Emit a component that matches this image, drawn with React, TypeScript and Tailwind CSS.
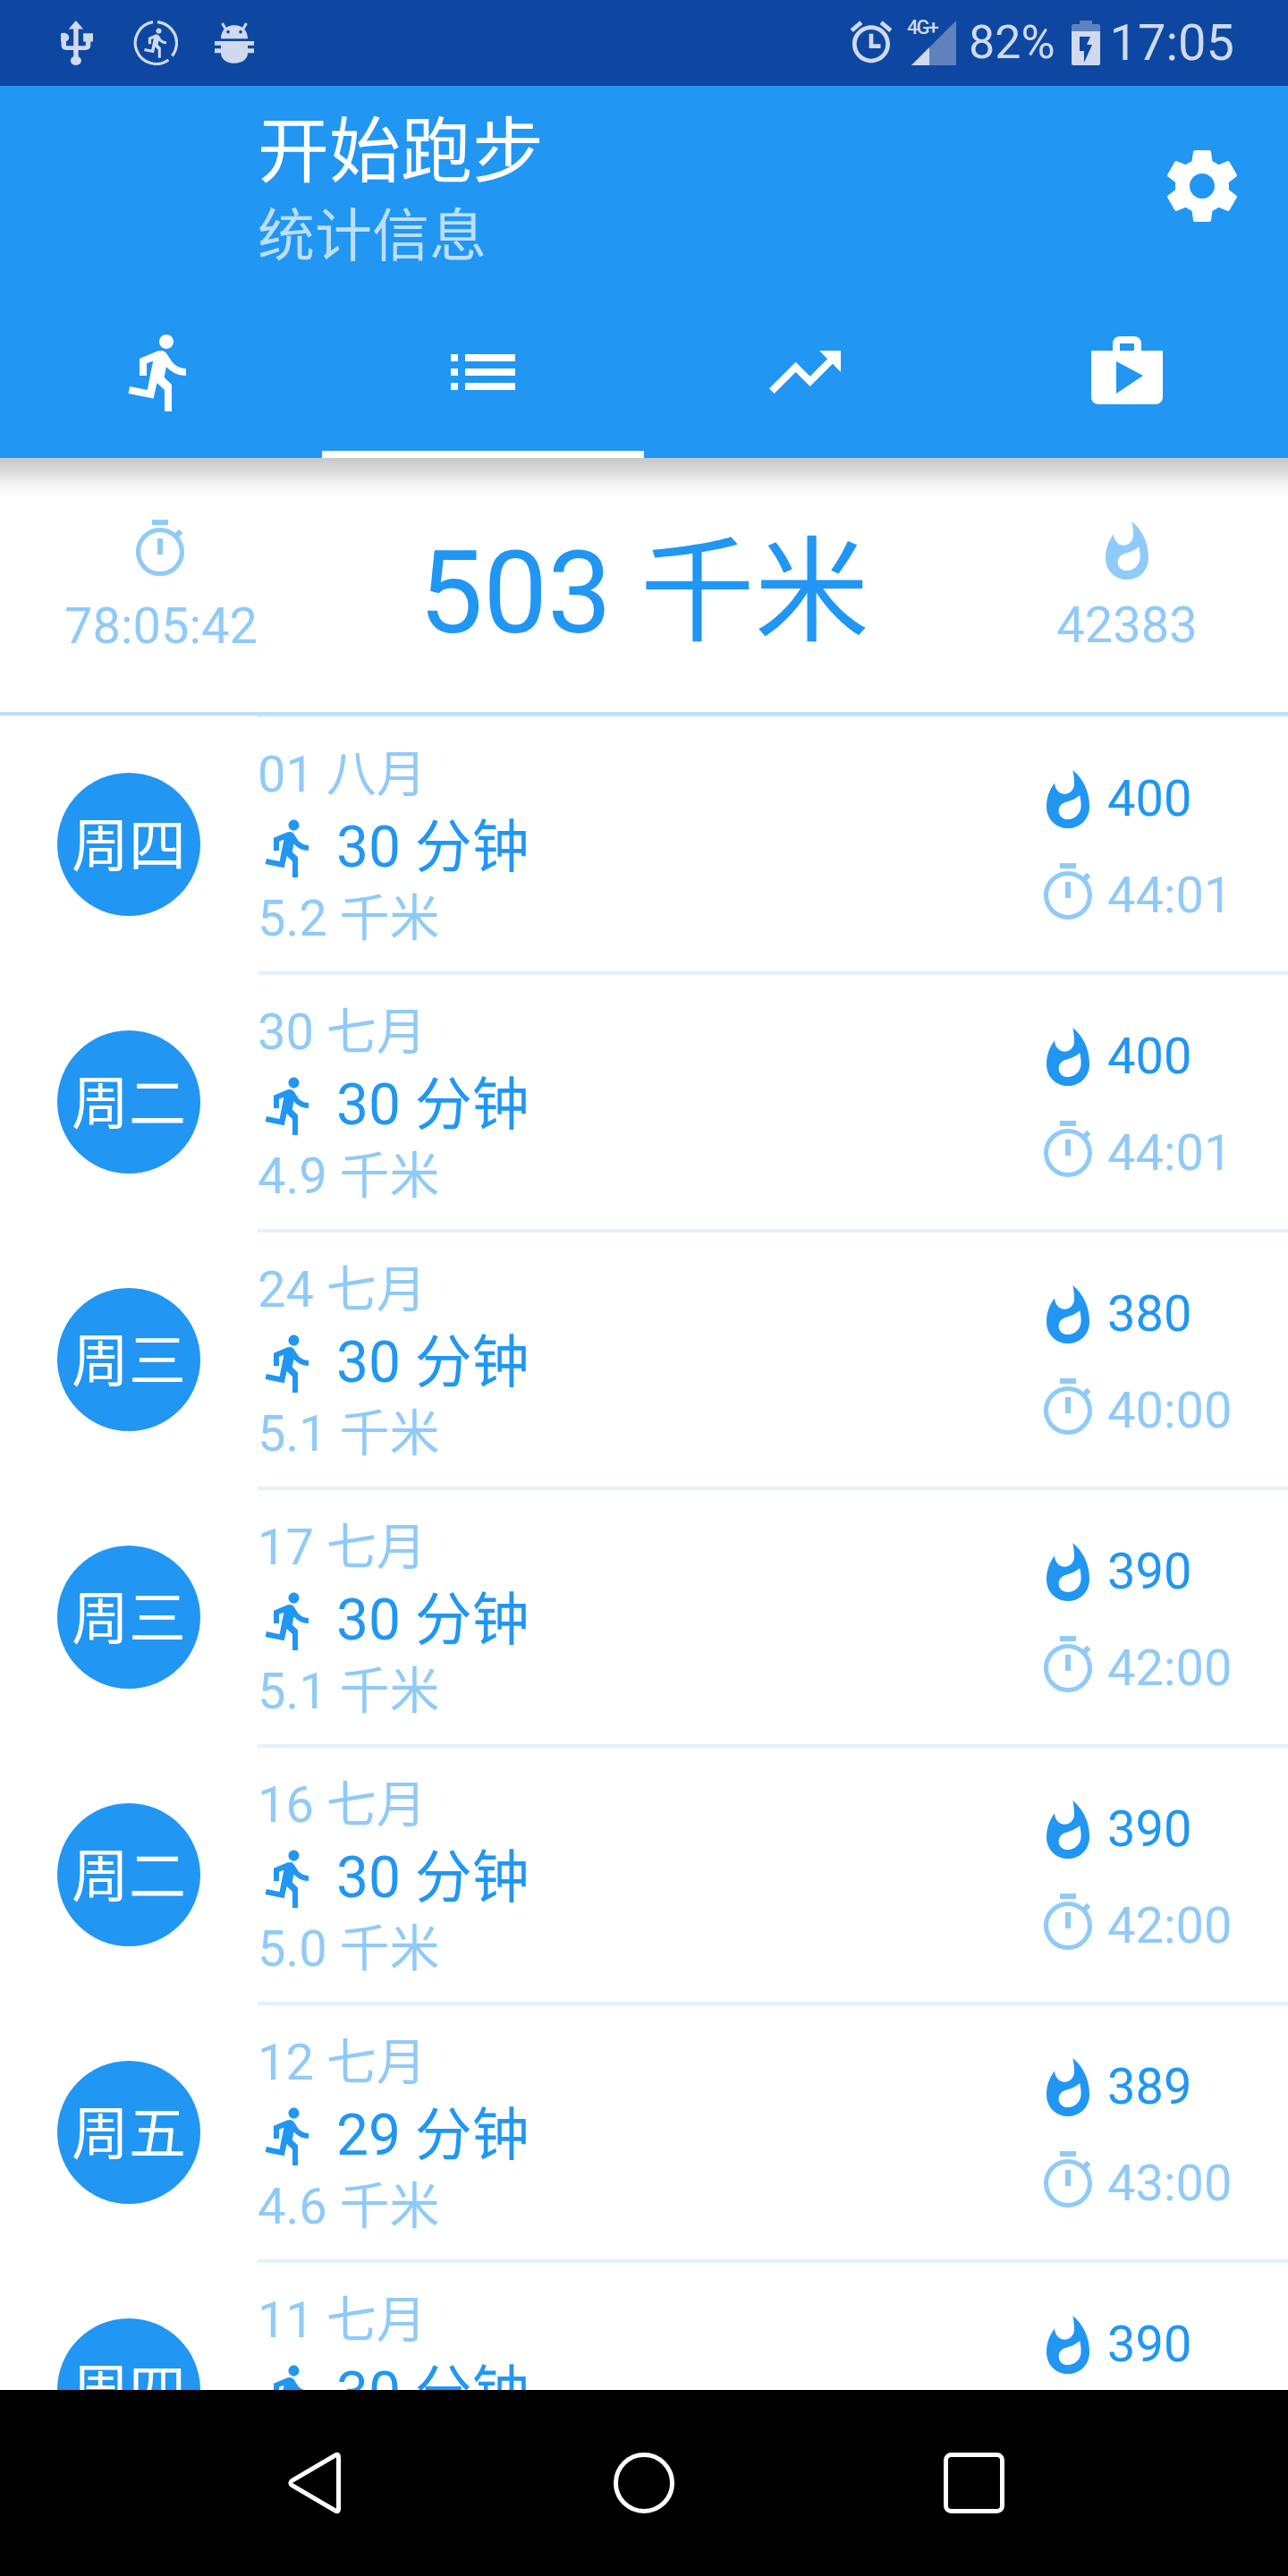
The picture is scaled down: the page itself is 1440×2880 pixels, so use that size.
import React from 'react';

const RUN = 'M13.49 5.48c1.1 0 2-.9 2-2s-.9-2-2-2-2 .9-2 2 .9 2 2 2zm-3.6 13.9l1-4.4 2.1 2v6h2v-7.5l-2.1-2 .6-3c1.3 1.5 3.3 2.5 5.5 2.5v-2c-1.9 0-3.5-1-4.3-2.4l-1-1.6c-.4-.6-1-1-1.7-1-.3 0-.5.1-.8.1l-5.2 2.2v4.7h2v-3.4l1.8-.7-1.6 8.1-4.9-1-.4 2 7 1.4z';
const LIST = 'M3 13h2v-2H3v2zm0 4h2v-2H3v2zm0-8h2V7H3v2zm4 4h14v-2H7v2zm0 4h14v-2H7v2zM7 7v2h14V7H7z';
const TREND = 'M16 6l2.29 2.29-4.88 4.88-4-4L2 16.59 3.41 18l6-6 4 4 6.3-6.29L22 12V6z';
const SHOP = 'M16 6V4c0-1.11-.89-2-2-2h-4c-1.11 0-2 .89-2 2v2H2v13c0 1.11.89 2 2 2h16c1.11 0 2-.89 2-2V6h-6zm-6-2h4v2h-4V4zM9 18V9l7.5 4L9 18z';
const GEAR = 'M19.43 12.98c.04-.32.07-.64.07-.98s-.03-.66-.07-.98l2.11-1.65c.19-.15.24-.42.12-.64l-2-3.46c-.12-.22-.39-.3-.61-.22l-2.49 1c-.52-.4-1.08-.73-1.69-.98l-.38-2.65C14.46 2.18 14.25 2 14 2h-4c-.25 0-.46.18-.49.42l-.38 2.65c-.61.25-1.17.59-1.69.98l-2.49-1c-.23-.09-.49 0-.61.22l-2 3.46c-.13.22-.07.49.12.64l2.11 1.65c-.04.32-.07.65-.07.98s.03.66.07.98l-2.11 1.65c-.19.15-.24.42-.12.64l2 3.46c.12.22.39.3.61.22l2.49-1c.52.4 1.08.73 1.69.98l.38 2.65c.03.24.24.42.49.42h4c.25 0 .46-.18.49-.42l.38-2.65c.61-.25 1.17-.59 1.69-.98l2.49 1c.23.09.49 0 .61-.22l2-3.46c.12-.22.07-.49-.12-.64l-2.11-1.65zM12 15.5c-1.93 0-3.5-1.57-3.5-3.5s1.57-3.5 3.5-3.5 3.5 1.57 3.5 3.5-1.57 3.5-3.5 3.5z';
const TIMER = 'M15 1H9v2h6V1zm-4 13h2V8h-2v6zm8.03-6.61l1.42-1.42c-.43-.51-.9-.99-1.41-1.41l-1.42 1.42C16.07 4.74 14.12 4 12 4c-4.97 0-9 4.03-9 9s4.02 9 9 9 9-4.03 9-9c0-2.12-.74-4.07-1.97-5.61zM12 20.3c-4.03 0-7.3-3.27-7.3-7.3s3.27-7.3 7.3-7.3 7.3 3.27 7.3 7.3-3.27 7.3-7.3 7.3z';
const USB = 'M15 7v4h1v2h-3V5h2l-3-4-3 4h2v8H8v-2.07c.7-.37 1.2-1.08 1.2-1.93 0-1.21-.99-2.2-2.2-2.2-1.21 0-2.2.99-2.2 2.2 0 .85.5 1.56 1.2 1.93V13c0 1.11.89 2 2 2h3v3.05c-.71.37-1.2 1.1-1.2 1.95 0 1.22.99 2.2 2.2 2.2 1.21 0 2.2-.98 2.2-2.2 0-.85-.49-1.58-1.2-1.95V15h3c1.11 0 2-.89 2-2v-2h1V7h-4z';
const ALARM = 'M22 5.72l-4.6-3.86-1.29 1.53 4.6 3.86L22 5.72zM7.88 3.39L6.6 1.86 2 5.71l1.29 1.53 4.59-3.85zM13 8h-2v7h5.5v-2H13V8zM12 4c-4.97 0-9 4.03-9 9s4.03 9 9 9c4.97 0 9-4.03 9-9s-4.03-9-9-9zm0 16c-3.87 0-7-3.13-7-7s3.13-7 7-7 7 3.13 7 7-3.13 7-7 7z';
const FLAME = 'M88 0C122 28 144 70 144 122C144 165 112 195 72 195C32 195 0 165 0 122C0 92 10 66 27 43C28 64 42 80 60 80C80 80 93 65 93 45C93 28 91 14 88 0ZM112 85C95 98 80 104 66 107C50 111 41 122 41 137C41 153 54 165 72 165C96 165 116 145 116 120C116 108 114 96 112 85Z';

const Mi = ({ d, className }: { d: string; className: string }) => (
  <svg viewBox="0 0 24 24" fill="currentColor" className={className}>
    <path d={d} />
  </svg>
);

const Flame = ({ className }: { className: string }) => (
  <svg viewBox="0 0 144 195" fill="currentColor" className={className}>
    <path d={FLAME} fillRule="evenodd" />
  </svg>
);

const rows = [
  { week: '周四', date: '01 八月', mins: '30', km: '5.2', cal: '400', time: '44:01' },
  { week: '周二', date: '30 七月', mins: '30', km: '4.9', cal: '400', time: '44:01' },
  { week: '周三', date: '24 七月', mins: '30', km: '5.1', cal: '380', time: '40:00' },
  { week: '周三', date: '17 七月', mins: '30', km: '5.1', cal: '390', time: '42:00' },
  { week: '周二', date: '16 七月', mins: '30', km: '5.0', cal: '390', time: '42:00' },
  { week: '周五', date: '12 七月', mins: '29', km: '4.6', cal: '389', time: '43:00' },
  { week: '周四', date: '11 七月', mins: '30', km: '5.0', cal: '390', time: '42:00' },
];

const StatusBar = () => (
  <div className="h-[96px] shrink-0 bg-[#0D47A1] text-[#D0D9ED] flex items-start pt-[23px]">
    <svg viewBox="5.8 1 13.2 21.2" preserveAspectRatio="none" fill="currentColor" className="ml-[68px] w-[36px] h-[50px]">
      <path d={USB} />
    </svg>
    {/* running app notification */}
    <svg viewBox="0 0 50 50" className="ml-[45px] w-[50px] h-[50px]">
      <path d="M27 1.6A23.5 23.5 0 0 1 43.4 39.6M39.4 44A23.5 23.5 0 1 1 22 1.7" fill="none" stroke="currentColor" strokeWidth="3.2" />
      <g transform="translate(7.6 6.2) scale(1.55)">
        <path d={RUN} fill="currentColor" />
      </g>
    </svg>
    {/* debugging notification */}
    <svg viewBox="0 0 44 46" fill="currentColor" className="ml-[41px] mt-[2px] w-[44px] h-[46px]">
      <path d="M8.5 1L12 7M35.5 1L32 7" stroke="currentColor" strokeWidth="3" fill="none" />
      <path fillRule="evenodd" d="M7 18.3C7 9 13 3.3 22 3.3S37 9 37 18.3ZM15 8.8a1.8 1.8 0 1 0 .01 0ZM29 8.8a1.8 1.8 0 1 0 .01 0Z" />
      <path d="M0 21H44V25.7H37V29.3H44V34.3H37C37 41 31 45.7 22 45.7S7 41 7 34.3H0V29.3H7V25.7H0Z" />
    </svg>
    <div className="ml-auto flex items-start">
      <Mi d={ALARM} className="w-[56px] h-[56px] -mt-[4px]" />
      <div className="relative w-[55px] h-[50px] ml-[12px]">
        <span className="absolute left-0 top-[-6px] text-[22px] leading-[28px] font-medium tracking-[-2px]">4G+</span>
        <svg viewBox="0 0 50 50" className="absolute left-[5px] top-0 w-[50px] h-[50px]">
          <path d="M50 0V50H0Z" fill="#5F82BF" />
          <path d="M20 30V50H0Z" fill="currentColor" />
        </svg>
      </div>
      <span className="ml-[14px] text-[52px] leading-[50px]">82%</span>
      <svg viewBox="0 0 32 50" className="ml-[18px] w-[32px] h-[50px]">
        <path d="M9 0H23V4H30Q32 4 32 6V12H0V6Q0 4 2 4H9Z" fill="#5F82BF" />
        <path fillRule="evenodd" d="M0 12H32V48Q32 50 30 50H2Q0 50 0 48ZM9 18V34H14V47L23 27H17L21 18Z" fill="currentColor" />
      </svg>
      <span className="ml-[11px] mr-[60px] text-[56px] leading-[50px]">17:05</span>
    </div>
  </div>
);

const AppBar = () => (
  <div className="h-[416px] shrink-0 bg-[#2196F3] text-white flex flex-col">
    <div className="h-[224px] flex justify-between pl-[288px] pr-[48px] pt-[27px]">
      <div>
        <div className="text-[80px] leading-[94px]">开始跑步</div>
        <div className="text-[64px] leading-[96px] text-[#BBDEFB]">统计信息</div>
      </div>
      <Mi d={GEAR} className="w-[96px] h-[96px] mt-[37px]" />
    </div>
    <div className="grid grid-cols-4 h-[192px]">
      {[RUN, LIST, TREND, SHOP].map((d, i) => (
        <div key={d} className={`flex justify-center pt-[48px] border-b-8 ${i === 1 ? 'border-white' : 'border-transparent'}`}>
          <Mi d={d} className="w-[96px] h-[96px]" />
        </div>
      ))}
    </div>
  </div>
);

const Summary = () => (
  <div className="h-[288px] border-b-4 border-[#BBDEFB] grid grid-cols-[360px_720px_360px] relative z-10">
    <div className="flex flex-col items-center pt-[66px] text-[#90CAF9]">
      <Mi d={TIMER} className="w-[72px] h-[72px] -ml-[2px]" />
      <div className="text-[56px] leading-[98px] mt-[1px]">78:05:42</div>
    </div>
    <div className="text-center pt-[71px] text-[128px] leading-[160px] text-[#2196F3]">503 千米</div>
    <div className="flex flex-col items-center pt-[71px] text-[#90CAF9]">
      <Flame className="w-[48px] h-[65px]" />
      <div className="text-[56px] leading-[98px] mt-[2px]">42383</div>
    </div>
  </div>
);

const Row = ({ r }: { r: (typeof rows)[number] }) => (
  <div className="h-[288px] flex">
    <div className="w-[288px] shrink-0 pt-[4px] flex items-center justify-center">
      <div className="w-[160px] h-[160px] rounded-full bg-[#2196F3] text-white text-[64px] pt-[6px] flex items-center justify-center">
        {r.week}
      </div>
    </div>
    <div className="flex-1 border-t-4 border-[#E3F2FD] flex">
      <div className="flex-1 pt-[24px]">
        <div className="h-[81px] text-[56px] leading-[81px] text-[#90CAF9]">{r.date}</div>
        <div className="h-[81px] text-[64px] leading-[81px] text-[#2196F3] flex items-center">
          <Mi d={RUN} className="w-[72px] h-[72px] mr-[16px] shrink-0" />
          <span>{r.mins} 分钟</span>
        </div>
        <div className="h-[79px] text-[56px] leading-[79px] text-[#90CAF9]">{r.km} 千米</div>
      </div>
      <div className="w-[282px] shrink-0 pt-[37px] text-[56px] leading-[108px]">
        <div className="h-[108px] flex items-center text-[#2196F3]">
          <div className="w-[72px] flex justify-center">
            <Flame className="w-[48px] h-[65px]" />
          </div>
          <span className="ml-[8px]">{r.cal}</span>
        </div>
        <div className="h-[108px] flex items-center text-[#90CAF9]">
          <Mi d={TIMER} className="w-[72px] h-[72px] -mt-[6px]" />
          <span className="ml-[8px]">{r.time}</span>
        </div>
      </div>
    </div>
  </div>
);

const NavBar = () => (
  <div className="h-[208px] shrink-0 bg-black flex items-center justify-center gap-[273px]">
    <svg viewBox="0 0 96 96" fill="none" stroke="white" strokeWidth="5" className="w-[96px] h-[96px]">
      <path d="M72 17Q75.5 15 75.5 19V77Q75.5 81 72 79L24 51Q19.5 48 24 45Z" />
    </svg>
    <svg viewBox="0 0 96 96" fill="none" stroke="white" strokeWidth="5" className="w-[96px] h-[96px]">
      <circle cx="48" cy="48" r="31.5" />
    </svg>
    <svg viewBox="0 0 96 96" fill="none" stroke="white" strokeWidth="5" className="w-[96px] h-[96px]">
      <rect x="16.5" y="16.5" width="63" height="63" rx="6" />
    </svg>
  </div>
);

export default function App() {
  return (
    <div className="w-[1440px] h-[2880px] overflow-hidden flex flex-col bg-white [font-family:Roboto,'Noto_Sans_CJK_SC',sans-serif]">
      <StatusBar />
      <AppBar />
      <div className="flex-1 min-h-0 overflow-hidden relative">
        {/* shadow under the app bar */}
        <div className="absolute top-0 inset-x-0 h-[44px] z-20 bg-[linear-gradient(#c8c8c8_0%,#d8d8d8_30%,#eeeeee_59%,#fcfcfc_89%,#ffffff_100%)]" />
        <Summary />
        <div className="-mt-[2px]">
          {rows.map((r) => (
            <Row key={r.date} r={r} />
          ))}
        </div>
      </div>
      <NavBar />
    </div>
  );
}
